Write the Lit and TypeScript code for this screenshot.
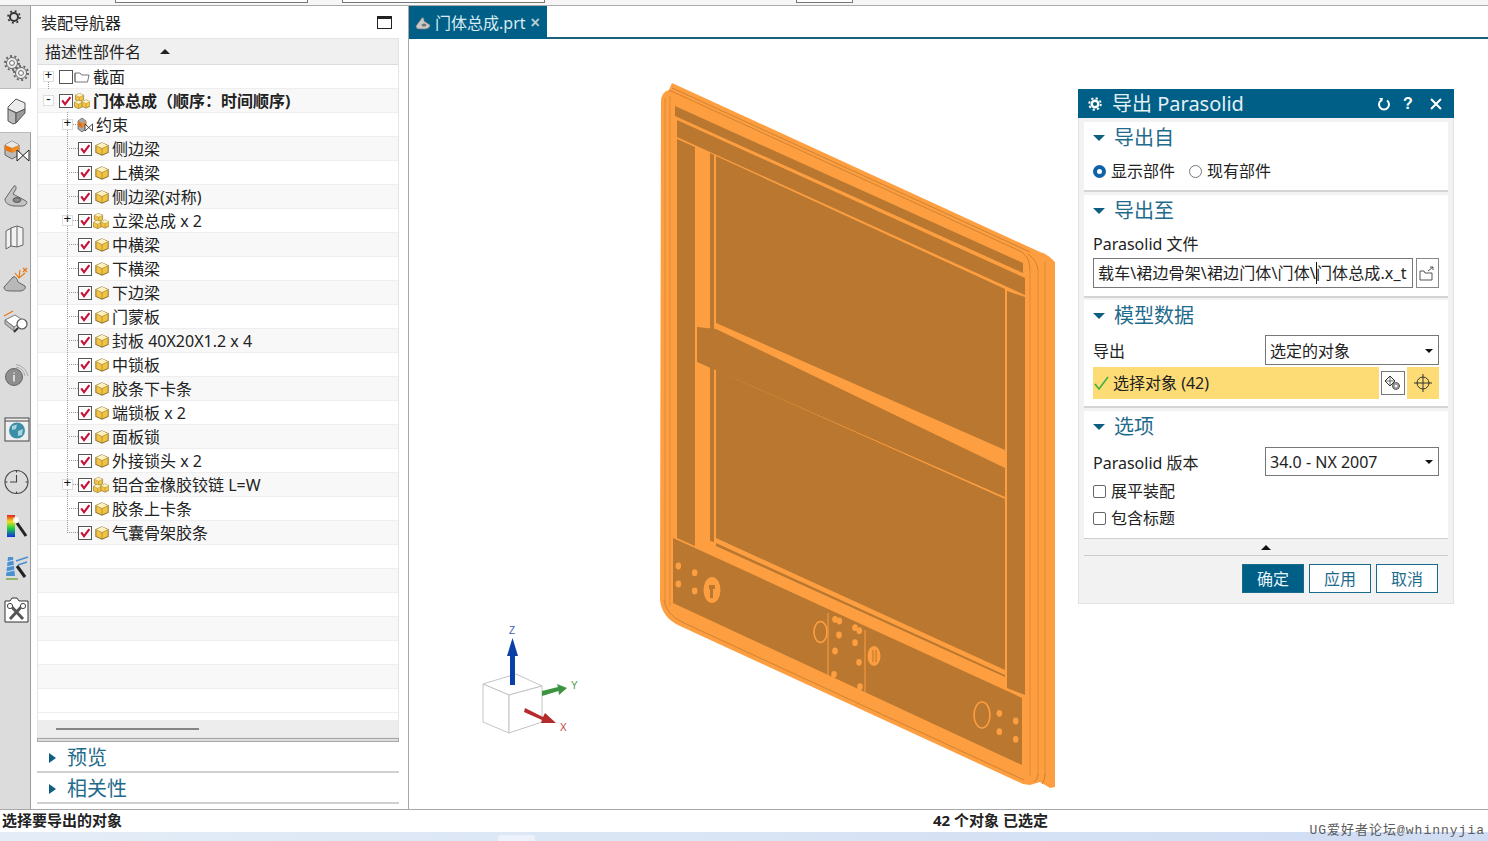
import { LitElement, html, svg, css } from 'lit';
import { customElement } from 'lit/decorators.js';

const LIGHT = '#fd9f41';
const DARK = '#b9772f';

// tree rows: level, label, icon kind, has expander
type Row = { label: string; level: number; kind: 'part' | 'asm' | 'con' | 'folder'; exp?: string; off?: boolean; bold?: boolean };
const rows: Row[] = [
  { label: '截面', level: 0, kind: 'folder', exp: '+', off: true },
  { label: '门体总成（顺序：时间顺序)', level: 0, kind: 'asm', exp: '−', bold: true },
  { label: '约束', level: 1, kind: 'con', exp: '+' },
  { label: '侧边梁', level: 1, kind: 'part' },
  { label: '上横梁', level: 1, kind: 'part' },
  { label: '侧边梁(对称)', level: 1, kind: 'part' },
  { label: '立梁总成 x 2', level: 1, kind: 'asm', exp: '+' },
  { label: '中横梁', level: 1, kind: 'part' },
  { label: '下横梁', level: 1, kind: 'part' },
  { label: '下边梁', level: 1, kind: 'part' },
  { label: '门蒙板', level: 1, kind: 'part' },
  { label: '封板 40X20X1.2 x 4', level: 1, kind: 'part' },
  { label: '中锁板', level: 1, kind: 'part' },
  { label: '胶条下卡条', level: 1, kind: 'part' },
  { label: '端锁板 x 2', level: 1, kind: 'part' },
  { label: '面板锁', level: 1, kind: 'part' },
  { label: '外接锁头 x 2', level: 1, kind: 'part' },
  { label: '铝合金橡胶铰链 L=W', level: 1, kind: 'asm', exp: '+' },
  { label: '胶条上卡条', level: 1, kind: 'part' },
  { label: '气囊骨架胶条', level: 1, kind: 'part' },
];
const EMPTY_ROWS = 7;

const cube = (x: number, y: number, s: number) => svg`
  <g transform="translate(${x} ${y}) scale(${s})">
    <path d="M6 0.5 L11.5 3 V9 L6 11.5 L0.5 9 V3Z" fill="#f2c445" stroke="#8f7430" stroke-width="0.9"/>
    <path d="M0.5 3 L6 0.5 L11.5 3 L6 5.6Z" fill="#fff2bd"/>
    <path d="M6 5.6 V11.5 M0.5 3 L6 5.6 L11.5 3" fill="none" stroke="#a98a38" stroke-width="0.7"/>
  </g>`;

const treeIcon = (kind: Row['kind']) => {
  if (kind === 'part') return html`<svg class="ti" width="14" height="14" viewBox="0 0 14 14">${cube(0.3, 0.3, 1.12)}</svg>`;
  if (kind === 'asm')
    return html`<svg class="ti" width="16" height="16" viewBox="0 0 16 16">
      ${cube(1, 0, 0.75)}${cube(0, 7, 0.75)}${cube(7.5, 6.5, 0.75)}
    </svg>`;
  if (kind === 'folder')
    return html`<svg class="ti" width="16" height="14" viewBox="0 0 16 14">
      <path d="M1 3 H6 L7.5 5 H15 L13.5 12 H1Z M1 12 V3" fill="#fff" stroke="#666" stroke-width="0.9"/>
    </svg>`;
  return html`<svg class="ti" width="17" height="16" viewBox="0 0 17 16">
    <path d="M1 4 L5 1 L9 4 V12 L5 15 L1 12Z" fill="#a9a9a9" stroke="#555" stroke-width="0.7"/>
    <path d="M1 4 L5 6.5 V11 L1 9Z" fill="#d9701e"/>
    <path d="M5 6.5 L9 4 V9 L5 11Z" fill="#e98b35"/>
    <path d="M8 7 L15.5 14 V7 L8 14Z" fill="#fff" stroke="#333" stroke-width="0.9"/>
  </svg>`;
};

// left rail icons: t = gap above the slot, h = slot height
const railIcons = [
  { t: 0, h: 26, icon: svg`<circle cx="14" cy="13" r="4" fill="none" stroke="#333" stroke-width="2"/><circle cx="14" cy="13" r="6" fill="none" stroke="#333" stroke-width="1.6" stroke-dasharray="2 2.7"/>` },
  { t: 21, h: 30, icon: svg`<g stroke="#666"><circle cx="10" cy="10" r="7" fill="none" stroke-width="2" stroke-dasharray="2 2.400"/><circle cx="10" cy="10" r="5.500" fill="#ececec"/><circle cx="10" cy="10" r="2.400" fill="#fff"/><circle cx="19" cy="20" r="7" fill="none" stroke-width="2" stroke-dasharray="2 2.400"/><circle cx="19" cy="20" r="5.500" fill="#ececec"/><circle cx="19" cy="20" r="2.400" fill="#fff"/></g>` },
  { t: 5, h: 45, active: true, icon: svg`<g stroke="#555" stroke-width="1"><path d="M14 3 L23 7 V13 L15 17 L6 13 V11Z" fill="#ececec"/><path d="M6 13 L14 17 V27 L11 28 L6 25Z" fill="#bbb"/><path d="M14 17 L23 13 V17 L14 27Z" fill="#999"/></g>` },
  { t: 4, h: 30, icon: svg`<path d="M3 8 L10 4 L17 8 V18 L10 22 L3 18Z" fill="#bbb" stroke="#666"/><path d="M3 8 L10 11 L17 8 L10 4Z" fill="#e8e8e8"/><path d="M3 8 L10 11 V16 L3 13Z" fill="#e8780f"/><path d="M10 11 L17 8 V13 L10 16Z" fill="#f28c28"/><path d="M15 13 L27 24 V13 L15 24Z" fill="#fff" stroke="#222"/>` },
  { t: 14, h: 30, icon: svg`<path d="M3 18 L12 5 C14 4 14 6 14 8 L11 13 L24 20 C26 22 24 24 21 25 L12 25 C6 24 3 22 3 18Z" fill="#c4c4c4" stroke="#666"/><ellipse cx="15" cy="19" rx="4" ry="2.400" fill="#888" stroke="#555"/>` },
  { t: 12, h: 30, icon: svg`<g fill="#f2f2f2" stroke="#666"><path d="M4 8 L9 5 V23 L4 26Z"/><path d="M9 5 L15 3 L21 5 V22 L15 24 L9 23Z"/><path d="M15 3 V24"/></g>` },
  { t: 12, h: 30, icon: svg`<path d="M2 22 L11 12 C14 11 15 14 16 17 L23 21 C24 24 22 25 19 26 L9 26 C4 26 2 25 2 22Z" fill="#b8b8b8" stroke="#666"/><path d="M18 5 L17 13 M13 8 L17 13 L23 8 M21 3 L25 7 M25 3 L21 7" stroke="#e8780f" fill="none" stroke-width="1.200"/>` },
  { t: 12, h: 30, icon: svg`<path d="M3 13 L13 8 L22 14 L12 20Z" fill="#fff" stroke="#777"/><path d="M3 13 V17 L12 24 V20Z" fill="#bbb" stroke="#777"/><path d="M2 9 L11 4" stroke="#e8780f" stroke-width="1.200"/><circle cx="20" cy="17" r="5" fill="#fff" stroke="#555" stroke-width="1.200"/><path d="M16 21 L12 25" stroke="#333" stroke-width="2"/>` },
  { t: 25, h: 30, icon: svg`<circle cx="12" cy="15" r="8.500" fill="#8e8e8e" stroke="#666"/><path d="M12 10.500 V11.500 M12 13 V19.500" stroke="#eee" stroke-width="1.600"/><path d="M14 5 A11 11 0 0 1 23 14 M14 2.500 A14 14 0 0 1 26 14" fill="none" stroke="#aaa"/>` },
  { t: 23, h: 30, icon: svg`<rect x="3" y="3" width="24" height="23" fill="#efefef" stroke="#444"/><path d="M3 6 H27" stroke="#444"/><circle cx="15" cy="15.500" r="8" fill="#3d8fa8"/><path d="M10 11 L15 9.500 L14 14 L10 15Z M16 16 L21 14 L20 20 L16 21Z" fill="#a8d3de"/>` },
  { t: 22, h: 30, icon: svg`<circle cx="14.500" cy="15" r="11.500" fill="none" stroke="#444" stroke-width="1.100"/><path d="M14.500 8 V15 H8 M14.500 3 V5.500 M14.500 24.500 V27 M3 15 H5.500 M23.500 15 H26" fill="none" stroke="#444" stroke-width="1.100"/>` },
  { t: 15, h: 30, icon: svg`<defs><linearGradient id="rb" x1="0" y1="0" x2="0" y2="1"><stop offset="0" stop-color="#e02020"/><stop offset="0.3" stop-color="#f0e020"/><stop offset="0.6" stop-color="#20d040"/><stop offset="1" stop-color="#1030e0"/></linearGradient></defs><rect x="5" y="3" width="8" height="22" fill="url(#rb)"/><path d="M15 11 L24 24" stroke="#222" stroke-width="3"/><circle cx="14" cy="8" r="3" fill="#fff" opacity="0.85"/>` },
  { t: 11, h: 30, icon: svg`<path d="M6 4 H11 L13 23 H4Z" fill="#4d90d0"/><path d="M4 9 L12 7 M4 14 L13 12 M4 19 L13 17" stroke="#cfe4f5"/><path d="M4 26 H16" stroke="#7aa84a" stroke-width="1.500"/><path d="M14 8 L26 4 M16 12 L25 9" stroke="#4d90d0" stroke-width="1.600"/><path d="M15 13 L23 24" stroke="#222" stroke-width="3"/>` },
  { t: 12, h: 30, icon: svg`<path d="M3 6 H8 L10 3 H15 L17 6 H26 V27 H3Z" fill="#fff" stroke="#333"/><path d="M8 10 L21 24 M21 10 L8 24" stroke="#555" stroke-width="3"/><circle cx="8" cy="11" r="2.600" fill="#fff" stroke="#444"/><circle cx="21" cy="11" r="2.600" fill="#fff" stroke="#444"/>` },
];

const smallHoles = [
  [85, 138], [134, 158], [85, 192], [134, 213],
  [555, 298], [568, 303], [567, 345], [555, 393], [552, 463],
  [615, 323], [628, 332], [615, 368], [627, 427], [630, 500],
  [1048, 580], [1048, 635], [1097, 603], [1097, 658],
];

@customElement('door-model')
export class DoorModel extends LitElement {
  static styles = css`
    :host { display: block; width: 100%; height: 100%; }
    svg { display: block; width: 100%; height: 100%; }
  `;

  render() {
    const poly = (p: string, fill = DARK) => svg`<polygon points=${p} fill=${fill}/>`;
    const seg = (x1: number, y1: number, x2: number, y2: number, w = 1.2, c = LIGHT) =>
      svg`<line x1=${x1} y1=${y1} x2=${x2} y2=${y2} stroke=${c} stroke-width=${w}/>`;
    return html`<svg viewBox="409 39 1079 770">
      <path fill=${LIGHT} d="M661 102 Q661 92 669 90 L672 83 L1040 252 Q1048 254 1055 262 L1055 787 L1050 788 L1040 782 L1030 785 L1023 784 L680 626 Q662 618 660 600Z"/>
      <path fill="none" stroke="#d08232" stroke-width="1" d="M669 90 L1022 252 M672 88 L1030 252 M664 600 Q666 614 682 622 L1024 780"/>
      <path fill="none" stroke="#d08232" stroke-width="1" d="M1022 252 Q1030 258 1030 270 M1028 254 Q1037 260 1038 270 M1034 782 Q1038 780 1038 774 M1042 784 Q1045 780 1045 774"/>
      ${seg(665, 98, 665, 602, 1, '#e0893a')}
      ${seg(670, 96, 670, 606, 1, '#e0893a')}
      ${seg(1030, 270, 1030, 776, 1, '#e0893a')}
      ${seg(1038, 270, 1038, 776, 1, '#e0893a')}
      ${seg(1045, 262, 1045, 776, 1, '#e0893a')}

      ${poly('675,106 1023,263 1023,273 675,116')}
      ${poly('677,120 1025,278 1025,295 677,137')}
      ${poly('677,139 695,147 695,546 677,538')}
      ${poly('710,153 714,155 714,542 710,541')}
      ${poly('716,156 1005,289 1005,450 716,323')}
      ${poly('697,327 716,329 1005,468 1005,497 697,362')}
      ${poly('716,370 1005,499 1005,670 716,538')}
      ${poly('716,543 1005,675 1005,677 716,546')}
      ${poly('1007,291 1025,297 1025,695 1007,688')}
      ${poly('673,538 695,548 1005,690 1022,698 1022,765 673,603')}

      ${seg(828, 613, 828, 675, 1)}
      ${seg(865, 630, 865, 693, 1)}
      ${smallHoles.map(
        ([x, y]) => svg`<ellipse cx=${650 + x / 3} cy=${520 + y / 3} rx="2.800" ry="3.400" fill=${LIGHT}/>`
      )}
      <ellipse cx="712" cy="590" rx="8.500" ry="13" fill=${LIGHT}/>
      <path d="M709 585 H715 V589 H713 V598 H710 V589 H709Z" fill=${DARK}/>
      <ellipse cx="820.500" cy="632" rx="6.500" ry="10.500" fill="none" stroke=${LIGHT} stroke-width="1.600"/>
      <ellipse cx="874" cy="656" rx="6.500" ry="10" fill=${LIGHT}/>
      <path d="M873 650 V662 M876 650 V662" stroke=${DARK}/>
      <ellipse cx="982" cy="715" rx="8" ry="13" fill="none" stroke=${LIGHT} stroke-width="1.600"/>
    </svg>`;
  }
}

@customElement('app-root')
export class AppRoot extends LitElement {
  static styles = css`
    :host {
      display: block;
      width: 1488px;
      height: 841px;
      overflow: hidden;
      position: relative;
      background: #fff;
      color: #222;
      font: 16px/22px 'Noto Sans', 'Noto Sans CJK SC', sans-serif;
    }
    svg { display: block; flex: none; }
    .page { display: flex; flex-direction: column; height: 100%; }

    .top { height: 6px; flex: none; display: flex; border-bottom: 1px solid #aaa; box-sizing: border-box; background: #f6f6f6; }
    .top i { display: block; height: 3px; background: #fff; border: 1px solid #777; border-top: 0; box-sizing: border-box; }
    .top .a { margin-left: 115px; width: 193px; }
    .top .b { margin-left: 34px; width: 203px; }
    .top .c { margin-left: 251px; width: 57px; }

    .main { flex: 1; display: flex; min-height: 0; }

    .rail { width: 31px; flex: none; background: #dcdcdc; border-right: 1px solid #9c9c9c; box-sizing: border-box; }
    .slot { display: flex; align-items: center; width: 30px; }
    .slot svg { margin-left: 2px; }
    .slot:first-child svg { margin-left: 0; }
    .slot.active { background: #fff; width: 31px; margin-right: -1px; border-top: 1px solid #bbb; border-bottom: 1px solid #bbb; box-sizing: border-box; position: relative; }

    .nav { width: 378px; flex: none; border-right: 1px solid #a8a8a8; box-sizing: border-box; display: flex; flex-direction: column; }
    .nav-title { height: 32px; flex: none; display: flex; align-items: center; padding: 1px 16px 0 10px; box-sizing: border-box; justify-content: space-between; }
    .maxi { width: 15px; height: 13px; box-sizing: border-box; border: 1px solid #222; border-top-width: 3px; }

    .tree { margin-left: 6px; width: 362px; height: 700px; flex: none; border: 1px solid #e4e4e4; box-sizing: border-box; display: flex; flex-direction: column; }
    .head { height: 26px; flex: none; display: flex; align-items: center; background: #f0f0f0; border-bottom: 1px solid #ddd; padding-left: 7px; box-sizing: border-box; }
    .sort { width: 0; height: 0; border: 5px solid transparent; border-top: 0; border-bottom: 5px solid #222; margin-left: 19px; }
    .rows { flex: 1; }
    .row { height: 24px; display: flex; align-items: center; border-bottom: 1px solid #eee; box-sizing: border-box; position: relative; white-space: nowrap; }
    .row.alt { background: #f8f8f8; }
    .row.b { font-weight: 700; }
    .l0 { padding-left: 5px; }
    .l1 { padding-left: 24px; }
    .exp, .noexp { width: 11px; height: 11px; flex: none; position: relative; z-index: 1; }
    .exp { background: #fff; border: 1px solid #ddd; box-sizing: border-box; font: 13px/8px 'Liberation Mono', monospace; text-align: center; color: #111; }
    .cb { width: 14px; height: 14px; flex: none; box-sizing: border-box; border: 1px solid #555; background: #fff; margin-left: 5px; position: relative; z-index: 1; }
    .cb svg { position: absolute; left: 0; top: 0; }
    .ti { margin-left: 1px; }
    .row .t { margin-left: 3px; }
    .row.part .ti { margin-left: 3px; }
    .row.con .ti { margin-left: 4px; }
    .row.con .t { margin-left: 2px; }
    .vline { position: absolute; width: 0; border-left: 1px dotted #999; top: -1px; bottom: -1px; left: 29px; }
    .vline.last { bottom: 11px; }
    .hline { position: absolute; height: 0; border-top: 1px dotted #999; left: 29px; width: 11px; top: 11px; }
    .rootline { position: absolute; left: 10px; top: 14px; height: 20px; border-left: 1px dotted #999; }
    .hbar { height: 17px; flex: none; background: #ededed; display: flex; align-items: center; padding-left: 18px; }
    .hbar i { display: block; width: 143px; height: 2px; background: #858585; }

    .split { margin-left: 6px; width: 362px; height: 4px; flex: none; background: #ddd; border: 1px solid #a8a8a8; box-sizing: border-box; }
    .sec { margin-left: 6px; width: 362px; flex: none; height: 31px; border-bottom: 2px solid #d0d0d0; display: flex; align-items: center; color: #1f6b8c; font-size: 20px; padding: 2px 0 0 12px; box-sizing: border-box; }
    .sec .tri { width: 0; height: 0; border: 5px solid transparent; border-right: 0; border-left: 7px solid #0d5f82; margin-right: 11px; }

    .view { flex: 1; min-width: 0; display: flex; flex-direction: column; }
    .tabs { height: 33px; flex: none; display: flex; border-bottom: 2px solid #1a6078; box-sizing: border-box; }
    .tab { width: 138px; background: #005f87; color: #d9ebf3; display: flex; align-items: center; padding-left: 6px; box-sizing: border-box; font-size: 16px; margin-bottom: -2px; }
    .tab span { margin-left: 4px; }
    .tab b { margin-left: 5px; font: 700 16px/1 'Liberation Sans', sans-serif; color: #b8ccd6; }
    .canvas { flex: 1; position: relative; min-height: 0; }
    door-model { position: absolute; inset: 0; }

    .dlg { position: absolute; left: 669px; top: 50px; width: 376px; height: 515px; box-sizing: border-box; background: #f2f2f2; border: 1px solid #e2e2e2; border-top: 0; display: flex; flex-direction: column; }
    .dlg-title { height: 29px; flex: none; margin: 0 -1px; background: #005f87; color: #e4f0f6; display: flex; align-items: center; padding-left: 10px; font-size: 20px; margin-bottom: 4px; }
    .dlg-title .name { margin-left: 10px; }
    .dlg-title .acts { margin-left: auto; display: flex; align-items: center; margin-right: 11px; gap: 10px; }
    .dlg-sec { margin: 0 5px 3px; background: #fff; border-bottom: 2px solid #d4d4d4; padding: 0 9px; flex: none; }
    .dlg-sec.two { margin-bottom: 2px; }
    .dlg-sec.three { margin-bottom: 3px; }
    .dlg-sec.four { margin-bottom: 0; border-bottom: 1px solid #ccc; padding-bottom: 10px; }
    .sec-h { height: 30px; display: flex; align-items: center; color: #1f6b8c; font-size: 20px; padding-top: 2px; box-sizing: border-box; }
    .sec-h i { width: 0; height: 0; border: 6px solid transparent; border-bottom: 0; border-top: 6px solid #0d5f82; margin-right: 9px; }
    .radios { display: flex; height: 22px; margin: 8px 0; align-items: center; }
    .radio { width: 13px; height: 13px; box-sizing: border-box; border-radius: 50%; margin-right: 5px; background: #fff; flex: none; }
    .radio.on { border: 4px solid #0f62a8; }
    .radio.off { border: 1px solid #777; margin-left: 14px; }
    .lab { height: 20px; line-height: 20px; margin-top: 9px; }
    .file { display: flex; justify-content: space-between; margin: 4px 0 8px; }
    .input { width: 320px; height: 30px; box-sizing: border-box; border: 1px solid #777; padding-left: 4px; line-height: 28px; white-space: nowrap; overflow: hidden; letter-spacing: 0.13px; }
    .caret { display: inline-block; width: 1px; height: 22px; background: #111; vertical-align: middle; margin: -3px -1px 0 0; }
    .browse { width: 23px; height: 30px; box-sizing: border-box; border: 1px solid #888; display: flex; align-items: center; justify-content: center; }
    .field { display: flex; justify-content: space-between; align-items: center; }
    .field > span { padding-top: 2px; }
    .drop { width: 174px; height: 30px; box-sizing: border-box; border: 1px solid #777; display: flex; align-items: center; padding: 1px 0 0 4px; background: #fff; }
    .drop.v { height: 29px; }
    .drop::after { content: ''; margin-left: auto; margin-right: 5px; border: 4px solid transparent; border-bottom: 0; border-top: 4px solid #111; }
    .m5 { margin-top: 5px; }
    .m6 { margin-top: 6px; }
    .select { display: flex; height: 32px; margin: 2px 0 7px; align-items: center; }
    .sel-main { width: 286px; height: 32px; background: #fddc75; display: flex; align-items: center; box-sizing: border-box; padding-left: 1px; }
    .sel-main svg { margin-right: 3px; }
    .sel-btn { width: 24px; height: 24px; margin-left: 2px; box-sizing: border-box; border: 1px solid #777; background: #fff; display: flex; align-items: center; justify-content: center; }
    .sel-x { width: 32px; height: 32px; margin-left: 2px; background: #fddc75; display: flex; align-items: center; justify-content: center; }
    .ck { display: flex; align-items: center; height: 20px; margin-top: 7px; }
    .ck.first { margin-top: 5px; }
    .ck i { width: 13px; height: 13px; box-sizing: border-box; border: 1px solid #666; border-radius: 2px; margin-right: 5px; }
    .more { margin: 0 5px; height: 17px; flex: none; border-bottom: 1px solid #ccc; display: flex; align-items: center; justify-content: center; box-sizing: border-box; }
    .more i { border: 5px solid transparent; border-top: 0; border-bottom: 5px solid #111; }
    .foot { display: flex; justify-content: flex-end; gap: 5px; margin-top: 8px; padding-right: 15px; }
    .btn { width: 62px; height: 29px; box-sizing: border-box; border: 1px solid #1a6a8e; color: #1f6b8c; display: flex; align-items: center; justify-content: center; background: #fff; }
    .btn.ok { background: #005f87; color: #e8f3f8; }

    .status { height: 23px; flex: none; border-top: 1px solid #a8a8a8; box-sizing: border-box; display: flex; align-items: center; font-size: 15px; font-weight: 700; padding: 0 0 2px 2px; position: relative; }
    .status .count { margin-left: 811px; }
    .task { height: 9px; flex: none; background: linear-gradient(90deg, #e4edf7, #dbe6f5 40%, #cfdcf3); padding-left: 498px; }
    .task i { display: block; width: 37px; height: 6px; margin-top: 3px; background: #edf2fa; border-radius: 3px 3px 0 0; }
    .mark { position: absolute; right: 3px; bottom: 2px; font: 13px/16px 'Liberation Mono', 'Noto Sans CJK SC', monospace; letter-spacing: 1px; color: #5b5b5b; white-space: nowrap; }
  `;

  private renderRow(r: Row, i: number) {
    const lastChild = i === rows.length - 1;
    return html`<div class="row ${r.level ? 'l1' : 'l0'} ${i % 2 ? 'alt' : ''} ${r.bold ? 'b' : ''} ${r.kind}">
      ${r.level ? html`<span class="vline ${lastChild ? 'last' : ''}"></span><span class="hline"></span>` : ''}
      ${i === 0 ? html`<span class="rootline"></span>` : ''}
      ${r.exp ? html`<span class="exp">${r.exp === '+' ? '+' : '-'}</span>` : html`<span class="noexp"></span>`}
      ${r.kind === 'con'
        ? ''
        : html`<span class="cb">
            ${r.off
              ? ''
              : html`<svg width="12" height="12" viewBox="0 0 11 11"><path d="M2 5 L4.600 8.500 L9.500 2" fill="none" stroke="#c8143c" stroke-width="2"/></svg>`}
          </span>`}
      ${treeIcon(r.kind)}
      <span class="t">${r.label}</span>
    </div>`;
  }

  render() {
    return html`<div class="page">
      <div class="top"><i class="a"></i><i class="b"></i><i class="c"></i></div>
      <div class="main">
        <div class="rail">
          ${railIcons.map(
            (r) => html`<div class="slot ${r.active ? 'active' : ''}" style="height:${r.h}px;margin-top:${r.t}px">
              <svg width="30" height="30" viewBox="0 0 30 30">${r.icon}</svg>
            </div>`
          )}
        </div>

        <div class="nav">
          <div class="nav-title"><span>装配导航器</span><span class="maxi"></span></div>
          <div class="tree">
            <div class="head"><span>描述性部件名</span><span class="sort"></span></div>
            <div class="rows">
              ${rows.map((r, i) => this.renderRow(r, i))}
              ${Array.from({ length: EMPTY_ROWS }, (_, i) => html`<div class="row ${(i + rows.length) % 2 ? 'alt' : ''}"></div>`)}
            </div>
            <div class="hbar"><i></i></div>
          </div>
          <div class="split"></div>
          <div class="sec"><span class="tri"></span>预览</div>
          <div class="sec"><span class="tri"></span>相关性</div>
        </div>

        <div class="view">
          <div class="tabs">
            <div class="tab">
              <svg width="16" height="14" viewBox="0 0 16 14"><path d="M1 10 L7 2 C9 1 9 3 9 5 L15 9 C15 12 12 13 9 13 H4 C2 13 1 12 1 10Z" fill="#c9c9c9" stroke="#777" stroke-width="0.7"/><ellipse cx="9" cy="9" rx="2.500" ry="1.500" fill="#777"/></svg>
              <span>门体总成.prt</span><b>×</b>
            </div>
          </div>
          <div class="canvas">
            <door-model></door-model>
            ${this.renderTriad()}
            ${this.renderDialog()}
          </div>
        </div>
      </div>
      <div class="status"><span>选择要导出的对象</span><span class="count">42 个对象 已选定</span></div>
      <div class="task"><i></i></div>
    </div>
    <div class="mark">UG爱好者论坛@whinnyjia</div>`;
  }

  private renderTriad() {
    return html`<svg style="position:absolute;left:71px;top:581px" width="110" height="120" viewBox="480 620 110 120">
      <g fill="#fff" stroke="#c4c4c4" stroke-width="1">
        <path d="M483 684 L516 674 L542 686 L509 695Z"/>
        <path d="M483 684 L509 695 V733 L483 722Z"/>
        <path d="M509 695 L542 686 V722 L509 733Z"/>
      </g>
      <path d="M510 685 V656 H507 L512.500 638 L518 656 H515 V685Z" fill="#0b3fa8"/>
      <path d="M542 691 L558 687 L557 684 L567 688 L559 695 L558.500 691 L542 696Z" fill="#3d9440"/>
      <path d="M525 708 L543 717 L545 713 L556 723 L541 723 L542 720 L524 712Z" fill="#b52a2a"/>
      <g font-family="Liberation Sans" font-size="10">
        <text x="509" y="634" fill="#4060b8">Z</text>
        <text x="571" y="689" fill="#4c9a50">Y</text>
        <text x="560" y="731" fill="#c04040">X</text>
      </g>
    </svg>`;
  }

  private renderDialog() {
    return html`<div class="dlg">
      <div class="dlg-title">
        <svg width="14" height="14" viewBox="0 0 14 14"><circle cx="7" cy="7" r="3.300" fill="none" stroke="#fff" stroke-width="2.400"/><circle cx="7" cy="7" r="5.800" fill="none" stroke="#fff" stroke-width="1.800" stroke-dasharray="2.200 2.350"/></svg>
        <span class="name">导出 Parasolid</span>
        <div class="acts">
          <svg width="14" height="14" viewBox="0 0 14 14"><path d="M4 3.500 A5 5 0 1 0 10 3.500" fill="none" stroke="#fff" stroke-width="2"/><path d="M2 1 L6 1 L5 5Z" fill="#fff"/></svg>
          <span style="font:700 16px/1 'Liberation Sans';color:#fff;width:14px;text-align:center">?</span>
          <svg style="margin-left:4px" width="14" height="14" viewBox="0 0 14 14"><path d="M2 2 L12 12 M12 2 L2 12" stroke="#fff" stroke-width="2"/></svg>
        </div>
      </div>

      <div class="dlg-sec">
        <div class="sec-h"><i></i>导出自</div>
        <div class="radios">
          <span class="radio on"></span><span>显示部件</span>
          <span class="radio off"></span><span>现有部件</span>
        </div>
      </div>

      <div class="dlg-sec two">
        <div class="sec-h"><i></i>导出至</div>
        <div class="lab">Parasolid 文件</div>
        <div class="file">
          <div class="input">载车\\裙边骨架\\裙边门体\\门体\\<span class="caret"></span>门体总成.x_t</div>
          <div class="browse">
            <svg width="17" height="15" viewBox="0 0 17 15"><path d="M1 5 H5 L6 7 H13 V14 H1Z M9 5 L14 1 M11 1 H14 V4" fill="none" stroke="#555"/></svg>
          </div>
        </div>
      </div>

      <div class="dlg-sec three">
        <div class="sec-h"><i></i>模型数据</div>
        <div class="field m5"><span>导出</span><div class="drop">选定的对象</div></div>
        <div class="select">
          <div class="sel-main">
            <svg width="16" height="16" viewBox="0 0 16 16"><path d="M1 9 L5 14 L14 2" fill="none" stroke="#3fae3f" stroke-width="1.600"/></svg>
            <span>选择对象 (42)</span>
          </div>
          <div class="sel-btn">
            <svg width="18" height="18" viewBox="0 0 18 18"><path d="M6 2 L11 7 L6 12 L1 7Z" fill="#fff" stroke="#333"/><path d="M1 7 H11 M6 2 V12" stroke="#333" stroke-width="0.700"/><circle cx="12" cy="12" r="3.500" fill="#999" stroke="#333" stroke-dasharray="1.500 0.700"/><circle cx="12" cy="12" r="1.300" fill="#fff"/></svg>
          </div>
          <div class="sel-x">
            <svg width="20" height="20" viewBox="0 0 20 20"><circle cx="10" cy="10" r="6" fill="none" stroke="#333"/><path d="M10 1 V19 M1 10 H19" stroke="#333"/></svg>
          </div>
        </div>
      </div>

      <div class="dlg-sec four">
        <div class="sec-h"><i></i>选项</div>
        <div class="field m6"><span>Parasolid 版本</span><div class="drop v">34.0 - NX 2007</div></div>
        <div class="ck first"><i></i><span>展平装配</span></div>
        <div class="ck"><i></i><span>包含标题</span></div>
      </div>

      <div class="more"><i></i></div>
      <div class="foot">
        <div class="btn ok">确定</div>
        <div class="btn">应用</div>
        <div class="btn">取消</div>
      </div>
    </div>`;
  }
}
